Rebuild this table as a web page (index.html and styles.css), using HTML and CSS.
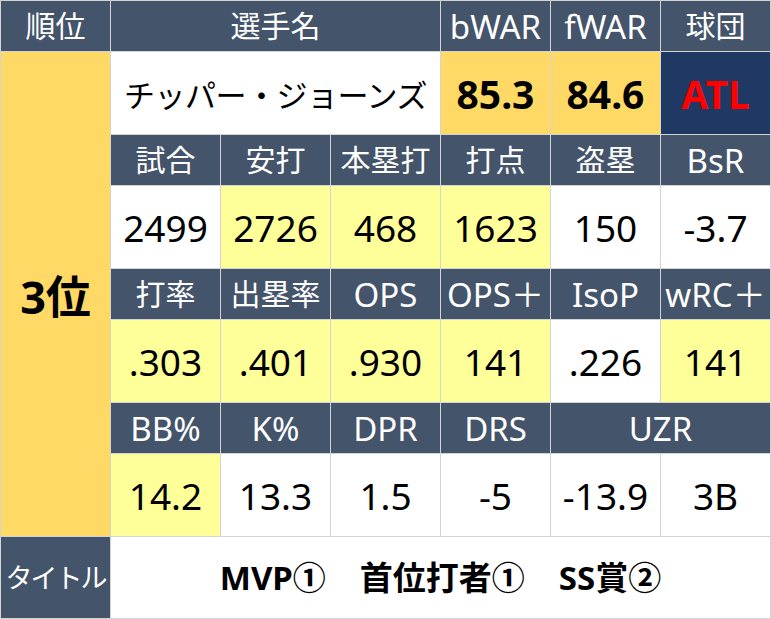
FILE: index.html
```html
<!DOCTYPE html>
<html lang="ja">
<head>
<meta charset="utf-8">
<title>チッパー・ジョーンズ</title>
<link rel="stylesheet" href="styles.css">
</head>
<body>
<div class="board">
  <div class="cell hd">順位</div>
  <div class="cell hd span3">選手名</div>
  <div class="cell hd lat">bWAR</div>
  <div class="cell hd lat">fWAR</div>
  <div class="cell hd">球団</div>

  <div class="cell rank">3位</div>
  <div class="cell name span3">チッパー・ジョーンズ</div>
  <div class="cell war">85.3</div>
  <div class="cell war">84.6</div>
  <div class="cell team">ATL</div>

  <div class="cell hd">試合</div>
  <div class="cell hd">安打</div>
  <div class="cell hd">本塁打</div>
  <div class="cell hd">打点</div>
  <div class="cell hd">盗塁</div>
  <div class="cell hd lat">BsR</div>

  <div class="cell val">2499</div>
  <div class="cell val hi">2726</div>
  <div class="cell val hi">468</div>
  <div class="cell val hi">1623</div>
  <div class="cell val">150</div>
  <div class="cell val">-3.7</div>

  <div class="cell hd">打率</div>
  <div class="cell hd">出塁率</div>
  <div class="cell hd lat">OPS</div>
  <div class="cell hd lat">OPS＋</div>
  <div class="cell hd lat">IsoP</div>
  <div class="cell hd lat">wRC＋</div>

  <div class="cell val hi">.303</div>
  <div class="cell val hi">.401</div>
  <div class="cell val hi">.930</div>
  <div class="cell val hi">141</div>
  <div class="cell val">.226</div>
  <div class="cell val hi">141</div>

  <div class="cell hd lat">BB%</div>
  <div class="cell hd lat">K%</div>
  <div class="cell hd lat">DPR</div>
  <div class="cell hd lat">DRS</div>
  <div class="cell hd lat span2">UZR</div>

  <div class="cell val hi">14.2</div>
  <div class="cell val">13.3</div>
  <div class="cell val">1.5</div>
  <div class="cell val">-5</div>
  <div class="cell val">-13.9</div>
  <div class="cell val">3B</div>

  <div class="cell hd title-label">タイトル</div>
  <div class="cell titles span6">
    <span>MVP①</span><span>首位打者①</span><span>SS賞②</span>
  </div>
</div>
</body>
</html>
```

FILE: styles.css
```css
html, body {
  margin: 0;
  padding: 0;
  background: #ffffff;
}

.board {
  width: 771px;
  height: 619px;
  box-sizing: border-box;
  display: grid;
  grid-template-columns: repeat(7, 109px);
  grid-template-rows: 50px 82px 50px 82px 50px 82px 50px 82px 81px;
  gap: 1px;
  padding: 1px;
  background: #d4d4d4;
  font-family: "Noto Sans", "Noto Sans CJK JP", sans-serif;
}

.cell {
  display: flex;
  align-items: center;
  justify-content: center;
  background: #ffffff;
  color: #000000;
  line-height: 1;
  white-space: nowrap;
  overflow: hidden;
}

.span2 { grid-column: span 2; }
.span3 { grid-column: span 3; }
.span6 { grid-column: span 6; }

.hd {
  background: #44546a;
  color: #ffffff;
  font-size: 30px;
}

.hd.lat {
  font-size: 33px;
}

.rank {
  grid-row: span 7;
  background: #ffd966;
  font-size: 45px;
  font-weight: 700;
  padding-top: 4px;
  box-sizing: border-box;
}

.name {
  font-family: "Noto Sans CJK JP", sans-serif;
  font-size: 31px;
  letter-spacing: -0.5px;
}

.war {
  background: #ffd966;
  font-size: 39px;
  font-weight: 700;
}

.team {
  background: #203864;
  color: #ff0000;
  font-size: 39px;
  font-weight: 700;
}

.val {
  font-size: 37px;
}

.hi {
  background: #ffff99;
}

.title-label {
  font-size: 27px;
  letter-spacing: -2px;
}

.titles {
  font-size: 33px;
  font-weight: 700;
  gap: 34px;
}
```
